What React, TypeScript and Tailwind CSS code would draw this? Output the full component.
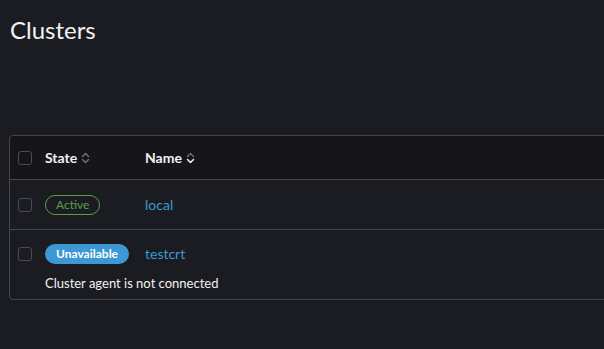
import React from 'react';

type Cluster = {
  name: string;
  state: 'Active' | 'Unavailable';
  message?: string;
};

const clusters: Cluster[] = [
  { name: 'local', state: 'Active' },
  { name: 'testcrt', state: 'Unavailable', message: 'Cluster agent is not connected' },
];

function SortIcon({ active }: { active?: boolean }) {
  return (
    <svg width="9" height="12" viewBox="0 0 9 12" fill="none" className="ml-[4px]">
      <path d="M1.5 4.5 L4.5 1.5 L7.5 4.5" stroke="#6b6b72" strokeWidth="1.5" strokeLinecap="round" strokeLinejoin="round" />
      <path d="M1.5 7.5 L4.5 10.5 L7.5 7.5" stroke={active ? '#f2f2f2' : '#6b6b72'} strokeWidth="1.5" strokeLinecap="round" strokeLinejoin="round" />
    </svg>
  );
}

function Checkbox() {
  return <div className="w-[14px] h-[14px] rounded-[3px] border border-[#4b4b52]" />;
}

function StateBadge({ state }: { state: Cluster['state'] }) {
  if (state === 'Active') {
    return (
      <span className="flex items-center h-[20px] px-[10px] rounded-full border border-[#5a9f4b] text-[#5a9f4b] text-[12px]">
        Active
      </span>
    );
  }
  return (
    <span className="flex items-center h-[20px] px-[11px] rounded-full bg-[#3d98d3] text-white text-[12px] font-bold">
      Unavailable
    </span>
  );
}

export default function App() {
  return (
    <div className="w-[604px] h-[349px] overflow-hidden bg-[#1b1c21] text-[#f2f2f2] font-['Lato','Liberation_Sans',sans-serif]">
      <div className="pl-[10px] pt-[15px]">
        <h1 className="text-[24px] leading-[30px]">Clusters</h1>
      </div>

      <div className="ml-[9px] mt-[90px] w-[760px] border border-[#45454c] rounded-[4px]">
        <div className="grid grid-cols-[35px_100px_1fr] items-center h-[44px] bg-[#16161a] rounded-t-[4px] border-b border-[#45454c] text-[14px] font-bold">
          <div className="pl-[8px]"><Checkbox /></div>
          <div className="flex items-center">State <SortIcon /></div>
          <div className="flex items-center">Name <SortIcon active /></div>
        </div>

        {clusters.map((c, i) => (
          <div
            key={c.name}
            className={i < clusters.length - 1 ? 'border-b border-[#45454c]' : ''}
          >
            <div className={`grid grid-cols-[35px_100px_1fr] items-center ${c.message ? 'h-[20px] mt-[14px]' : 'h-[49px]'}`}>
              <div className="pl-[8px]"><Checkbox /></div>
              <div className="flex"><StateBadge state={c.state} /></div>
              <div className="text-[14px] leading-[20px] text-[#3d98d3]">{c.name}</div>
            </div>
            {c.message && (
              <div className="pl-[35px] pt-[9px] pb-[6px] text-[13px] leading-[20px]">{c.message}</div>
            )}
          </div>
        ))}
      </div>
    </div>
  );
}
